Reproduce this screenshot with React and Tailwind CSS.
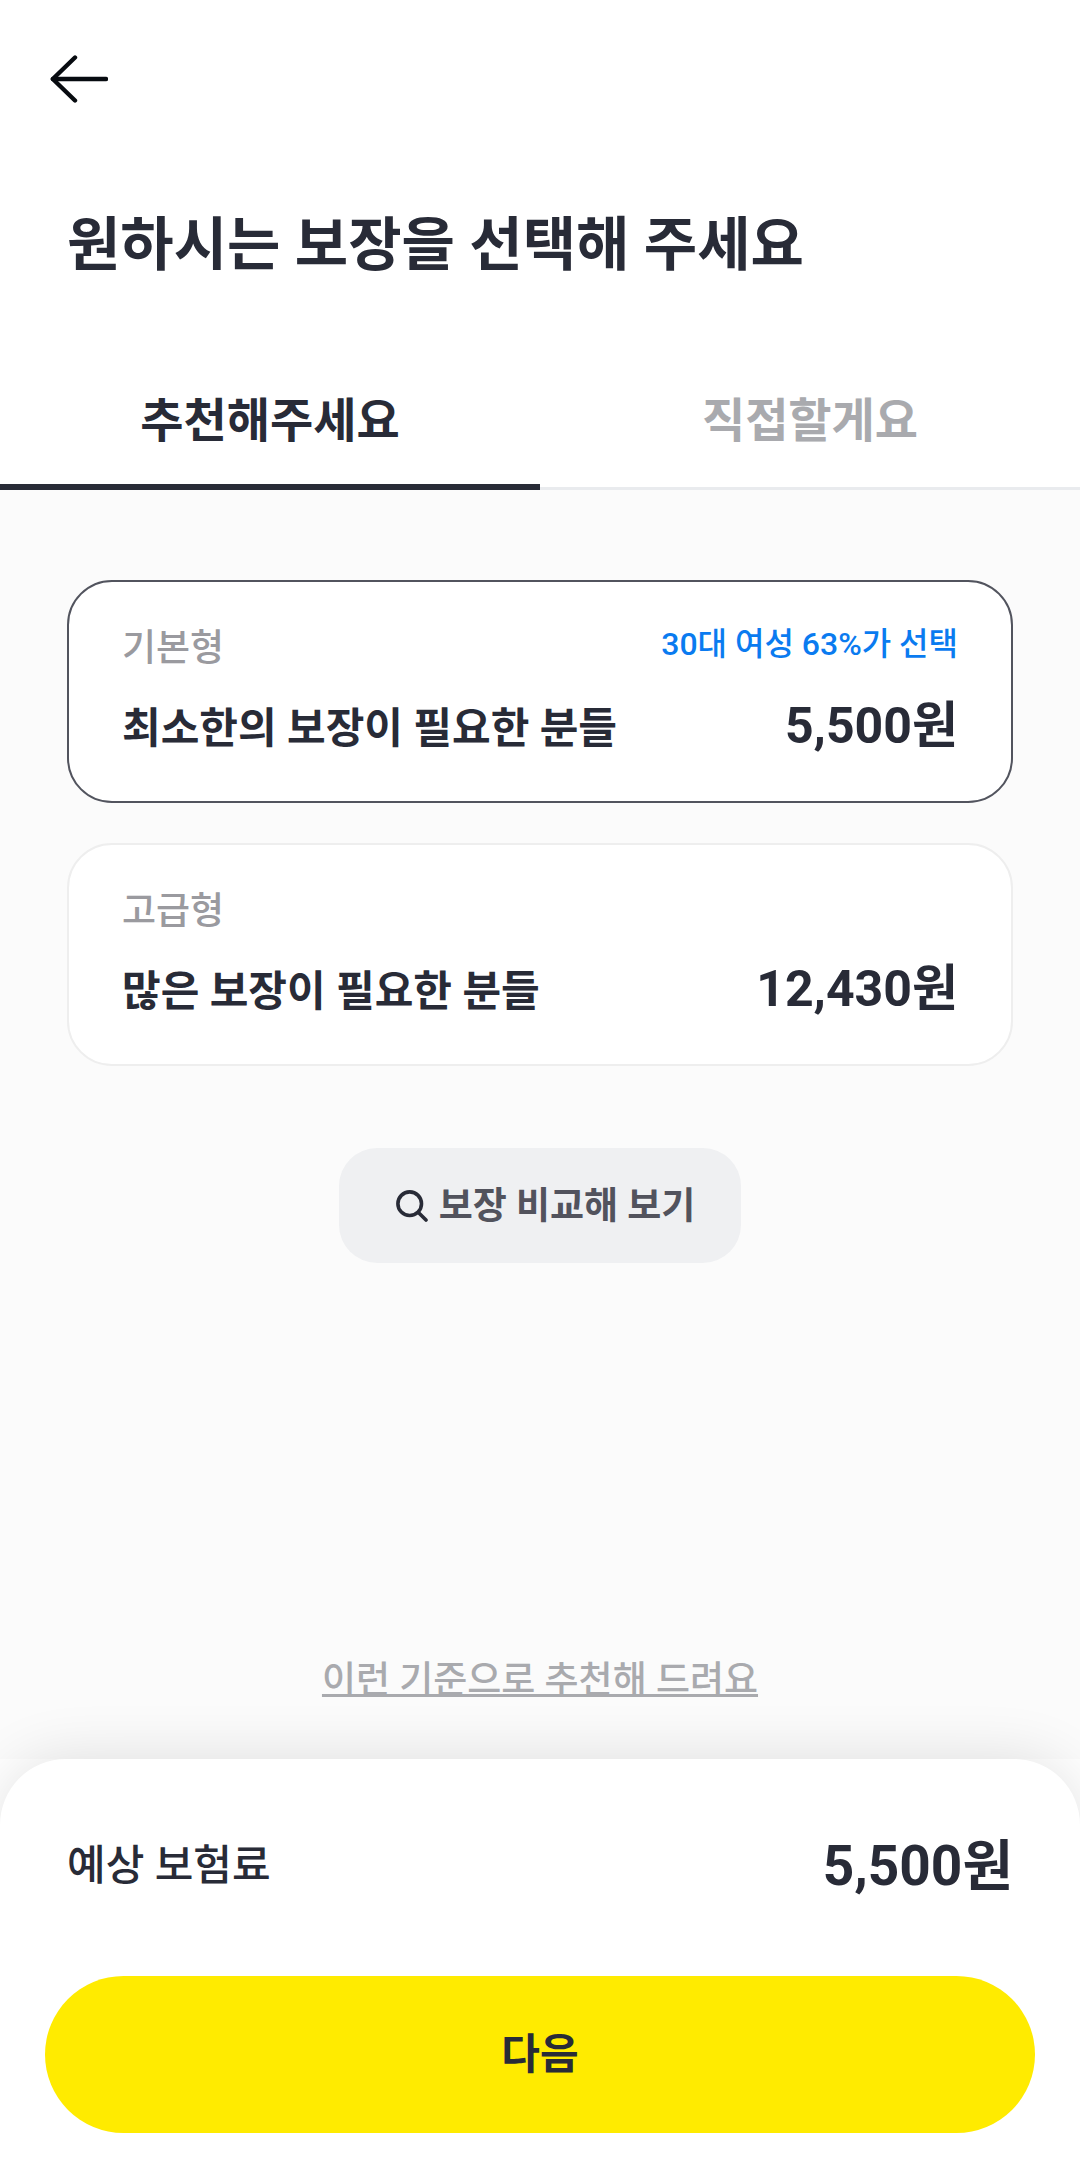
import React, { useState } from 'react';
import clsx from 'clsx';

const TABS = [
    { id: 'recommend', label: '추천해주세요' },
    { id: 'custom', label: '직접할게요' }
];

const PLANS = [
    { id: 'basic', name: '기본형', description: '최소한의 보장이 필요한 분들', price: 5500, badge: '30대 여성 63%가 선택' },
    { id: 'premium', name: '고급형', description: '많은 보장이 필요한 분들', price: 12430 }
];

const formatPrice = (price) => `${price.toLocaleString('en-US')}원`;

function BackIcon() {
    return (
        <svg width="58" height="48" viewBox="0 0 58 48" fill="none" stroke="#070b10" strokeWidth="4.4" strokeLinecap="round" strokeLinejoin="round" aria-hidden="true">
            <path d="M25 2.5 2.8 24 25 45.5" />
            <path d="M3 24h53" />
        </svg>
    );
}

function SearchIcon() {
    return (
        <svg width="32" height="32" viewBox="0 0 32 32" fill="none" stroke="#282b37" strokeWidth="3.6" strokeLinecap="round" aria-hidden="true">
            <circle cx="13.7" cy="13.7" r="11.8" />
            <path d="m22.4 22.4 7.6 7.6" />
        </svg>
    );
}

function PlanCard({ plan, selected, onSelect }) {
    return (
        <label
            className={clsx(
                'relative block cursor-pointer rounded-[45px] border-2 bg-white px-[53px] pt-[42px] pb-[41px]',
                selected ? 'border-[#52545e]' : 'border-[#eeeeee]'
            )}
        >
            <input
                type="radio"
                name="plan"
                className="sr-only"
                value={plan.id}
                checked={selected}
                onChange={() => onSelect(plan.id)}
            />
            <span className="flex items-start justify-between">
                <span className="text-[37px] leading-[50px] font-medium text-[#9a9a9f]">{plan.name}</span>
                {plan.badge && (
                    <span className="text-[32px] leading-[40px] font-medium text-[#0a7bf0]">{plan.badge}</span>
                )}
            </span>
            <span className="mt-[20px] flex h-[66px] items-baseline justify-between">
                <span className="text-[42px] leading-[64px] font-bold">{plan.description}</span>
                <span className="text-[50px] leading-[64px] font-bold">{formatPrice(plan.price)}</span>
            </span>
        </label>
    );
}

export default function App() {
    const [tab, setTab] = useState('recommend');
    const [planId, setPlanId] = useState('basic');

    const plan = PLANS.find(p => p.id === planId);

    return (
        <div className="flex min-h-screen flex-col bg-white font-['Roboto','Noto_Sans_CJK_KR',sans-serif] text-[#282b37]">
            <header>
                <div className="flex h-[158px] items-center px-[50px]">
                    <button type="button" aria-label="뒤로" className="cursor-pointer">
                        <BackIcon />
                    </button>
                </div>
                <h1 className="mt-[47px] px-[67px] text-[58px] leading-[80px] font-bold">원하시는 보장을 선택해 주세요</h1>
                <div role="tablist" className="mt-[63px] grid grid-cols-2">
                    {TABS.map(t => (
                        <button
                            key={t.id}
                            type="button"
                            role="tab"
                            aria-selected={tab === t.id}
                            onClick={() => setTab(t.id)}
                            className={clsx(
                                'h-[142px] cursor-pointer pt-[4px] text-[47px] leading-[64px] font-bold',
                                tab === t.id ? 'shadow-[inset_0_-6px_0_#282b37]' : 'text-[#a9aaae] shadow-[inset_0_-3px_0_#e9ebee]'
                            )}
                        >
                            {t.label}
                        </button>
                    ))}
                </div>
            </header>

            <main className="flex flex-1 flex-col items-center bg-[#fbfbfb] px-[67px] pt-[90px] pb-[53px]">
                <fieldset aria-label="보장 선택" className="flex w-full flex-col gap-[40px]">
                    {PLANS.map(p => (
                        <PlanCard key={p.id} plan={p} selected={p.id === planId} onSelect={setPlanId} />
                    ))}
                </fieldset>

                <button
                    type="button"
                    className="mt-[82px] flex h-[115px] cursor-pointer items-center gap-[11px] rounded-[38px] bg-[#eff0f2] pr-[46px] pl-[57px] text-[37px] font-bold text-[#52535d]"
                >
                    <SearchIcon />
                    <span className="pt-[2px]">보장 비교해 보기</span>
                </button>

                <a
                    href="#criteria"
                    className="mt-auto text-[37px] leading-[50px] font-medium text-[#a9aaae] underline decoration-3 underline-offset-1 [text-decoration-skip-ink:none]"
                >
                    이런 기준으로 추천해 드려요
                </a>
            </main>

            <footer className="relative">
                <div className="rounded-t-[66px] bg-white px-[45px] pt-[72px] pb-[44px] shadow-[0_0_60px_rgba(0,0,0,0.12)]">
                    <div className="flex items-center justify-between px-[22px]">
                        <span className="text-[42px] leading-[70px] font-medium">예상 보험료</span>
                        <strong className="text-[55px] leading-[70px] font-bold">{formatPrice(plan.price)}</strong>
                    </div>
                    <button
                        type="button"
                        className="mt-[75px] block h-[157px] w-full cursor-pointer rounded-full bg-[#ffeb00] text-[42px] font-bold"
                    >
                        다음
                    </button>
                </div>
            </footer>
        </div>
    );
}
